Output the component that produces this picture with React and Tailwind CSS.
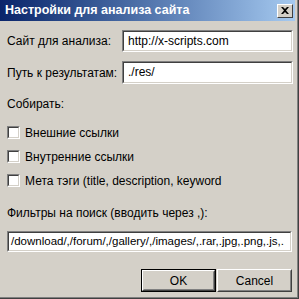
import React from "react";

function Sunken({ className = "", children }) {
  return (
    <div className={`border border-t-[#808080] border-l-[#808080] border-b-white border-r-white ${className}`}>
      <div className="h-full w-full border border-t-[#404040] border-l-[#404040] border-b-[#d4d0c8] border-r-[#d4d0c8] bg-white">
        {children}
      </div>
    </div>
  );
}

function Checkbox({ label }) {
  return (
    <div className="flex items-center h-[13px]">
      <Sunken className="w-[13px] h-[13px] shrink-0" />
      <span className="ml-[5px] whitespace-nowrap">{label}</span>
    </div>
  );
}

function Button({ label, isDefault }) {
  const inner = (
    <div className="h-full w-full border border-t-white border-l-white border-b-[#404040] border-r-[#404040]">
      <div className="h-full w-full border border-t-[#d4d0c8] border-l-[#d4d0c8] border-b-[#808080] border-r-[#808080] flex items-center justify-center">
        {label}
      </div>
    </div>
  );
  return (
    <div className={`w-[75px] h-[23px] ${isDefault ? "border border-black" : ""}`}>{inner}</div>
  );
}

export default function App() {
  return (
    <div
      className="w-[299px] h-[299px] bg-[#d4d0c8] text-[12px] text-black overflow-hidden flex flex-col"
      style={{ fontFamily: '"Liberation Sans", Arial, sans-serif' }}
    >
      <div className="flex flex-1 flex-col border-r border-b border-r-[#404040] border-b-[#404040]">
        <div className="flex flex-1 flex-col border-r border-b border-r-[#808080] border-b-[#808080]">
          <div className="flex flex-1 flex-col border-r border-b border-r-[#d4d0c8] border-b-[#d4d0c8] pr-[1px]">
            {/* Title bar */}
            <div className="h-[21px] flex items-center justify-between bg-gradient-to-r from-[#0a246a] to-[#a6caf0] pl-[5px] pr-[2px]">
              <span className="text-white font-bold text-[12.5px] whitespace-nowrap">Настройки для анализа сайта</span>
              <div className="w-[16px] h-[14px] border border-t-white border-l-white border-b-[#404040] border-r-[#404040] bg-[#d4d0c8] flex items-center justify-center">
                <svg width="8" height="7" viewBox="0 0 8 7">
                  <path d="M0 0h2l2 2 2-2h2L5 3.5 8 7H6L4 5 2 7H0l3-3.5z" fill="black" />
                </svg>
              </div>
            </div>
            {/* Body */}
            <div className="flex flex-col pl-[7px] pr-[2px]">
              <div className="flex items-center mt-[9px] h-[22px]">
                <span className="w-[115px]">Сайт для анализа:</span>
                <Sunken className="flex-1 h-[22px]">
                  <div className="pl-[4px] leading-[18px]">http://x-scripts.com</div>
                </Sunken>
              </div>
              <div className="flex items-center mt-[9px] h-[23px]">
                <span className="w-[115px]">Путь к результатам:</span>
                <Sunken className="flex-1 h-[23px]">
                  <div className="pl-[4px] leading-[18px]">./res/</div>
                </Sunken>
              </div>
              <div className="mt-[12px] h-[16px] leading-[16px]">Собирать:</div>
              <div className="mt-[14px] flex flex-col gap-[11px]">
                <Checkbox label="Внешние ссылки" />
                <Checkbox label="Внутренние ссылки" />
                <Checkbox label="Мета тэги (title, description, keyword" />
              </div>
              <div className="mt-[18px] h-[16px] leading-[16px]">Фильтры на поиск (вводить через ,):</div>
              <Sunken className="mt-[10px] h-[21px] w-[285px]">
                <div className="pl-[2px] leading-[17px] whitespace-nowrap overflow-hidden text-[11.5px]">
                  /download/,/forum/,/gallery/,/images/,.rar,.jpg,.png,.js,.
                </div>
              </Sunken>
              <div className="mt-[17px] flex justify-end gap-[1px] pr-[1px]">
                <Button label="OK" isDefault />
                <Button label="Cancel" />
              </div>
            </div>
          </div>
        </div>
      </div>
    </div>
  );
}
